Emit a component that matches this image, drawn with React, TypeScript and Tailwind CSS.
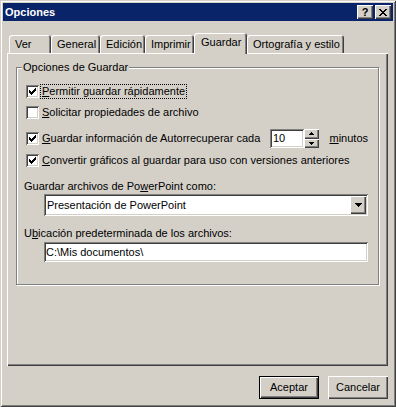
import React from 'react';

const raised = 'shadow-[inset_1px_1px_0_#fff,inset_-1px_-1px_0_#404040,inset_-2px_-2px_0_#808080]';
const sunken = 'shadow-[inset_1px_1px_0_#808080,inset_-1px_-1px_0_#fff,inset_2px_2px_0_#404040,inset_-2px_-2px_0_#d4d0c8]';

function Check() {
  return (
    <svg width="13" height="13" viewBox="0 0 13 13" shapeRendering="crispEdges">
      <path
        d="M9 3h1v1H9z M8 4h2v1H8z M3 5h1v1H3z M7 5h3v1H7z M3 6h2v1H3z M6 6h3v1H6z M3 7h5v1H3z M4 8h3v1H4z M5 9h1v1H5z"
        fill="#000"
      />
    </svg>
  );
}

function CheckBox({ checked }: { checked: boolean }) {
  return <div className={`w-[13px] h-[13px] shrink-0 bg-white ${sunken}`}>{checked && <Check />}</div>;
}

function Arrow({ up }: { up?: boolean }) {
  return (
    <svg width="7" height="4" viewBox="0 0 7 4" shapeRendering="crispEdges" className={up ? 'rotate-180' : ''}>
      <path d="M0 0h7v1H0z M1 1h5v1H1z M2 2h3v1H2z M3 3h1v1H3z" fill="#000" />
    </svg>
  );
}

function SmallArrow({ up }: { up?: boolean }) {
  return (
    <svg width="5" height="3" viewBox="0 0 5 3" shapeRendering="crispEdges" className={up ? 'rotate-180' : ''}>
      <path d="M0 0h5v1H0z M1 1h3v1H1z M2 2h1v1H2z" fill="#000" />
    </svg>
  );
}

const tabShadow = 'shadow-[inset_1px_1px_0_#fff,inset_-1px_0_0_#404040,inset_-2px_0_0_#808080]';

function Tab({ label, w, active }: { label: string; w: string; active?: boolean }) {
  if (active) {
    return (
      <div className={`${w} h-[21px] -mb-px relative z-10 bg-[#d4d0c8] rounded-t-[3px] pl-[7px] pb-[3px] flex items-center ${tabShadow}`}>
        {label}
      </div>
    );
  }
  return (
    <div className={`${w} h-[18px] rounded-t-[3px] pl-[6px] flex items-center ${tabShadow}`}>{label}</div>
  );
}

export default function App() {
  return (
    <div
      className={`w-[396px] h-[407px] bg-[#d4d0c8] flex flex-col pt-[3px] text-[11px] text-black font-['Liberation_Sans',Arial,sans-serif] leading-[13px] shadow-[inset_1px_1px_0_#d4d0c8,inset_-1px_-1px_0_#404040,inset_2px_2px_0_#fff,inset_-2px_-2px_0_#808080]`}
    >
      {/* title bar */}
      <div className="mx-[3px] h-[18px] bg-[#0a246a] flex items-center justify-between pl-[2px] pr-[2px]">
        <span className="text-white font-bold text-[11px]">Opciones</span>
        <div className="flex gap-[2px]">
          <div className={`w-[16px] h-[14px] bg-[#d4d0c8] flex items-center justify-center font-bold text-[11px] leading-[11px] ${raised}`}>
            ?
          </div>
          <div className={`w-[16px] h-[14px] bg-[#d4d0c8] flex items-center justify-center ${raised}`}>
            <svg width="8" height="7" viewBox="0 0 8 7" shapeRendering="crispEdges">
              <path
                d="M0 0h2v1H0z M6 0h2v1H6z M1 1h2v1H1z M5 1h2v1H5z M2 2h4v1H2z M3 3h2v1H3z M2 4h4v1H2z M1 5h2v1H1z M5 5h2v1H5z M0 6h2v1H0z M6 6h2v1H6z"
                fill="#000"
              />
            </svg>
          </div>
        </div>
      </div>

      {/* tabs + panel */}
      <div className="mt-[12px] pl-[7px] pr-[8px]">
        <div className="flex items-end h-[20px] pl-[2px]">
          <Tab label="Ver" w="w-[42px]" />
          <Tab label="General" w="w-[49px]" />
          <Tab label="Edición" w="w-[45px]" />
          <Tab label="Imprimir" w="w-[49px]" />
          <Tab label="Guardar" w="w-[53px]" active />
          <Tab label="Ortografía y estilo" w="w-[97px]" />
        </div>

        <div className={`h-[313px] pl-[9px] pr-[9px] pt-[14px] ${raised}`}>
          <div className="relative border border-[#808080] shadow-[inset_1px_1px_0_#fff,1px_1px_0_#fff] pl-[9px] pr-[10px] pt-[13px] pb-[22px]">
            <span className="absolute left-[5px] -top-[8px] px-px bg-[#d4d0c8] leading-[14px]">Opciones de Guardar</span>

            <div className="flex items-center h-[21px]">
              <CheckBox checked />
              <span className="ml-[2px] px-px outline-1 outline-dotted outline-black">
                <u>P</u>ermitir guardar rápidamente
              </span>
            </div>
            <div className="flex items-center h-[21px]">
              <CheckBox checked={false} />
              <span className="ml-[3px]">
                <u>S</u>olicitar propiedades de archivo
              </span>
            </div>
            <div className="flex items-center h-[27px] pt-[3px]">
              <CheckBox checked />
              <span className="ml-[3px] w-[228px] shrink-0">
                <u>G</u>uardar información de Autorrecuperar cada
              </span>
              <div className={`w-[36px] h-[19px] bg-white flex items-center pl-[3px] ${sunken}`}>10</div>
              <div className="w-[17px] h-[19px] flex flex-col">
                <div className={`h-[10px] bg-[#d4d0c8] flex items-center justify-center ${raised}`}>
                  <SmallArrow up />
                </div>
                <div className={`h-[9px] bg-[#d4d0c8] flex items-center justify-center ${raised}`}>
                  <SmallArrow />
                </div>
              </div>
              <span className="ml-[10px]">
                <u>m</u>inutos
              </span>
            </div>
            <div className="flex items-center h-[21px]">
              <CheckBox checked />
              <span className="ml-[3px]">
                <u>C</u>onvertir gráficos al guardar para uso con versiones anteriores
              </span>
            </div>

            <div className="mt-[7px] -ml-[2px] h-[16px] leading-[16px]">
              Guardar archivos de Po<u>w</u>erPoint como:
            </div>
            <div className={`ml-[18px] h-[22px] bg-white flex items-center justify-between pl-[3px] pr-[2px] ${sunken}`}>
              <span>Presentación de PowerPoint</span>
              <div className={`w-[16px] h-[18px] bg-[#d4d0c8] flex items-center justify-center ${raised}`}>
                <Arrow />
              </div>
            </div>

            <div className="mt-[9px] -ml-[2px] h-[16px] leading-[16px]">
              U<u>b</u>icación predeterminada de los archivos:
            </div>
            <div className={`mt-px ml-[18px] h-[20px] bg-white flex items-center pl-[2px] ${sunken}`}>
              C:\Mis documentos\
            </div>
          </div>
        </div>
      </div>

      {/* buttons */}
      <div className="flex justify-end gap-[9px] mt-[10px] pr-[8px]">
        <div className="w-[60px] h-[23px] border border-black">
          <div className={`w-full h-full flex items-center justify-center ${raised}`}>Aceptar</div>
        </div>
        <div className={`w-[60px] h-[23px] flex items-center justify-center ${raised}`}>Cancelar</div>
      </div>
    </div>
  );
}
